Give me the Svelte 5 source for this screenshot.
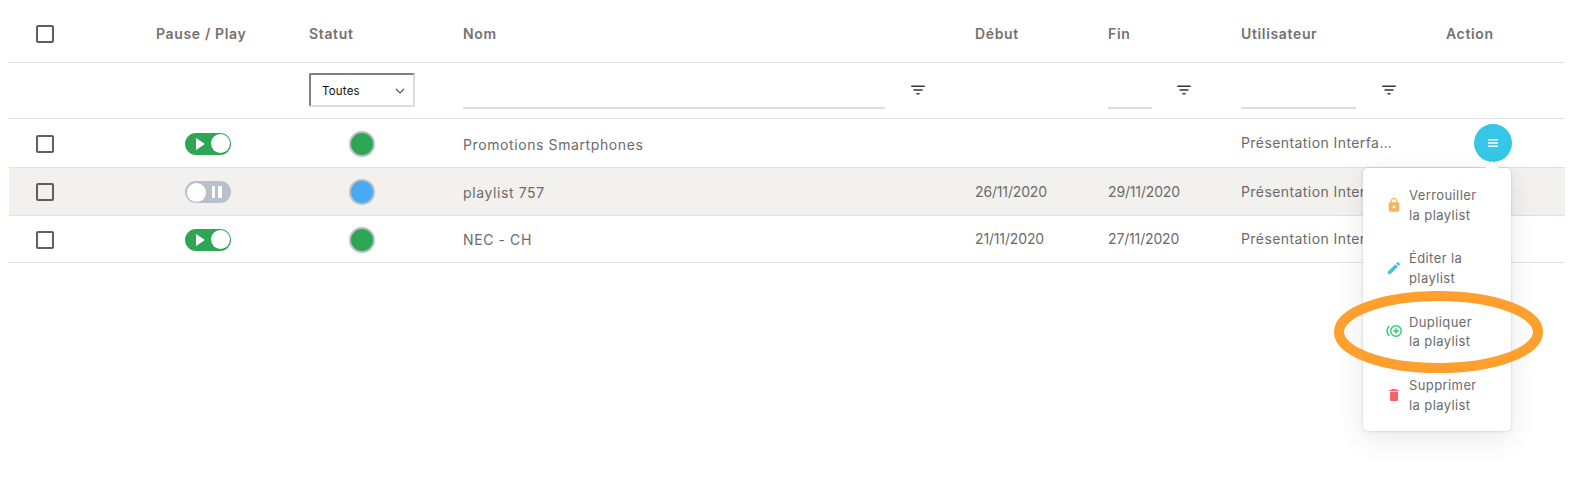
<script>
  const rows = [
    { on: true, status: "green", name: "Promotions Smartphones", start: "", end: "" },
    { on: false, status: "blue", name: "playlist 757", start: "26/11/2020", end: "29/11/2020" },
    { on: true, status: "green", name: "NEC - CH", start: "21/11/2020", end: "27/11/2020" },
  ];
  const filterPath = "M10 18h4v-2h-4v2zM3 6v2h18V6H3zm3 7h12v-2H6v2z";
</script>

<div class="page">
  <table>
    <colgroup>
      <col style="width:147px" /><col style="width:153px" /><col style="width:154px" /><col style="width:512px" />
      <col style="width:133px" /><col style="width:133px" /><col style="width:205px" /><col style="width:119px" />
    </colgroup>
    <thead>
      <tr class="head">
        <th class="first"><span class="check"></span></th>
        <th>Pause / Play</th>
        <th>Statut</th>
        <th>Nom</th>
        <th>Début</th>
        <th>Fin</th>
        <th>Utilisateur</th>
        <th>Action</th>
      </tr>
      <tr class="filters">
        <td></td>
        <td></td>
        <td>
          <div class="select">
            <span>Toutes</span>
            <svg width="10" height="6" viewBox="0 0 10 6"><path d="M1 1l4 4 4-4" fill="none" stroke="#555" stroke-width="1.2" /></svg>
          </div>
        </td>
        <td>
          <div class="filter" style="--w:422px;--gap:24px">
            <span class="field"></span>
            <svg width="18" height="18" viewBox="0 0 24 24"><path d={filterPath} fill="#333" /></svg>
          </div>
        </td>
        <td></td>
        <td>
          <div class="filter" style="--w:44px;--gap:23px">
            <span class="field"></span>
            <svg width="18" height="18" viewBox="0 0 24 24"><path d={filterPath} fill="#333" /></svg>
          </div>
        </td>
        <td>
          <div class="filter" style="--w:115px;--gap:24px">
            <span class="field"></span>
            <svg width="18" height="18" viewBox="0 0 24 24"><path d={filterPath} fill="#333" /></svg>
          </div>
        </td>
        <td></td>
      </tr>
    </thead>
    <tbody>
      {#each rows as row, i}
        <tr class:alt={i === 1} class="row{i}">
          <td class="first"><span class="check"></span></td>
          <td>
            <div class="toggle" class:on={row.on}>
              {#if row.on}
                <svg width="14" height="14" viewBox="0 0 14 14"><path d="M3 1l9 6-9 6z" fill="#fff" /></svg>
                <span class="knob"></span>
              {:else}
                <span class="knob"></span>
                <span class="bars"><i></i><i></i></span>
              {/if}
            </div>
          </td>
          <td><div class="dot {row.status}"></div></td>
          <td class="name">{row.name}</td>
          <td class="date">{row.start}</td>
          <td class="date">{row.end}</td>
          <td><div class="user">Présentation Interface</div></td>
          <td></td>
        </tr>
      {/each}
    </tbody>
  </table>

  <button class="menu-btn" aria-label="Actions">
    <svg width="14" height="14" viewBox="0 0 14 14"><path d="M2 3h10v1.600H2zM2 6.200h10v1.600H2zM2 9.400h10V11H2z" fill="#fff" /></svg>
  </button>

  <div class="menu">
    <span class="caret"></span>
    <div class="item">
      <svg width="16" height="16" viewBox="0 0 24 24"><path fill="#F7B55F" d="M18 8h-1V6c0-2.760-2.240-5-5-5S7 3.240 7 6v2H6c-1.100 0-2 .9-2 2v10c0 1.100.9 2 2 2h12c1.100 0 2-.9 2-2V10c0-1.100-.9-2-2-2zm-6 9c-1.100 0-2-.9-2-2s.9-2 2-2 2 .9 2 2-.9 2-2 2zm3.100-9H8.900V6c0-1.710 1.390-3.100 3.100-3.100 1.710 0 3.100 1.390 3.100 3.100v2z" /></svg>
      <span>Verrouiller<br />la playlist</span>
    </div>
    <div class="item">
      <svg width="16" height="16" viewBox="0 0 24 24"><path fill="#36C7E8" d="M3 17.250V21h3.750L17.810 9.940l-3.750-3.750L3 17.250zM20.710 7.040c.39-.39.39-1.020 0-1.410l-2.340-2.340c-.39-.39-1.020-.39-1.410 0l-1.830 1.830 3.750 3.750 1.830-1.830z" /></svg>
      <span>Éditer la<br />playlist</span>
    </div>
    <div class="item tall">
      <svg width="16" height="16" viewBox="0 0 16 16" fill="none" stroke="#2ECC71" stroke-width="1.400">
        <circle cx="10" cy="8" r="5.300" />
        <path d="M10 5.300v5.400M7.300 8h5.400" />
        <path d="M3.400 3a6.500 6.500 0 0 0 0 10" />
      </svg>
      <span>Dupliquer<br />la playlist</span>
    </div>
    <div class="item">
      <svg width="16" height="16" viewBox="0 0 24 24"><path fill="#F8636B" d="M6 19c0 1.100.9 2 2 2h8c1.100 0 2-.9 2-2V7H6v12zM19 4h-3.500l-1-1h-5l-1 1H5v2h14V4z" /></svg>
      <span>Supprimer<br />la playlist</span>
    </div>
  </div>

  <svg class="mark" width="209" height="82" viewBox="0 0 209 82">
    <ellipse cx="104.500" cy="41" rx="99.500" ry="36" fill="none" stroke="#FF9F2E" stroke-width="10" />
  </svg>
</div>

<style>
  :global(body) {
    background: #fff;
  }
  .page {
    position: relative;
    height: 479px;
    padding-left: 9px;
    overflow: hidden;
    font-family: Inter, "Liberation Sans", sans-serif;
    font-size: 14px;
    letter-spacing: 0.55px;
    color: #6b6b6b;
  }
  table {
    table-layout: fixed;
    width: 1556px;
    border-collapse: collapse;
  }
  th,
  td {
    padding: 0;
    border-bottom: 1px solid #e2e2e2;
    text-align: left;
    vertical-align: middle;
    white-space: nowrap;
  }
  th {
    padding-top: 6px;
    font-weight: 600;
    letter-spacing: 0.65px;
    color: #757170;
  }
  tbody td {
    padding-top: 2px;
  }
  .first {
    padding-left: 27px;
  }
  .head {
    height: 62px;
  }
  .filters {
    height: 56px;
  }
  .row0 {
    height: 49px;
  }
  .row1 {
    height: 48px;
  }
  .row2 {
    height: 47px;
  }
  .alt {
    background: #f2f1ee;
  }
  .check {
    display: block;
    box-sizing: border-box;
    width: 18px;
    height: 18px;
    border: 2px solid #605f5f;
    border-radius: 2px;
    background: #fff;
  }
  .alt .check {
    background: #f2f1ee;
  }
  .select {
    box-sizing: border-box;
    display: flex;
    align-items: center;
    justify-content: space-between;
    width: 106px;
    height: 34px;
    padding: 2px 8px 0 11px;
    border: 2px solid;
    border-color: #808080 #dcdcdc #dcdcdc #808080;
    border-radius: 2px;
    font-size: 11.500px;
    letter-spacing: 0.2px;
    color: #111;
  }
  .filter {
    display: flex;
    align-items: flex-start;
    gap: var(--gap);
    height: 38px;
  }
  .filter svg {
    margin-top: 10px;
  }
  .field {
    width: var(--w);
    height: 36px;
    border-bottom: 2px solid #dedede;
  }
  .toggle {
    box-sizing: border-box;
    display: flex;
    align-items: center;
    justify-content: space-between;
    width: 46px;
    height: 22px;
    margin-left: 29px;
    padding: 0 1.500px;
    border-radius: 11px;
    background: #b8c0cb;
  }
  .toggle.on {
    padding-left: 8px;
    background: #2ea653;
  }
  .knob {
    width: 19px;
    height: 19px;
    border-radius: 50%;
    background: #fff;
  }
  .bars {
    display: flex;
    gap: 3px;
    margin-right: 8px;
  }
  .bars i {
    width: 3.500px;
    height: 12px;
    background: #fff;
  }
  .dot {
    box-sizing: border-box;
    width: 26px;
    height: 26px;
    margin-left: 40px;
    border: 2px solid #b8bfc9;
    border-radius: 50%;
  }
  .dot.green {
    background: #2ea653;
  }
  .dot.blue {
    background: #47aaf2;
  }
  .name {
    letter-spacing: 0.6px;
  }
  .row0 .name {
    padding-top: 4px;
  }
  .date {
    padding-top: 0;
    letter-spacing: -0.15px;
  }
  .user {
    width: 153px;
    overflow: hidden;
    text-overflow: ellipsis;
    letter-spacing: 0.42px;
    margin-top: -2px;
  }
  .menu-btn {
    position: absolute;
    left: 1474px;
    top: 124px;
    display: flex;
    align-items: center;
    justify-content: center;
    width: 38px;
    height: 38px;
    padding: 0;
    border: 0;
    border-radius: 50%;
    background: #36c7e8;
  }
  .menu {
    position: absolute;
    left: 1363px;
    top: 168px;
    box-sizing: border-box;
    width: 148px;
    height: 263px;
    padding: 6px 0;
    border-radius: 5px;
    background: #fff;
    box-shadow: 0 0 3px rgba(0, 0, 0, 0.18), 0 8px 30px rgba(0, 0, 0, 0.09);
    font-size: 13px;
    line-height: 19.500px;
    letter-spacing: 0.4px;
  }
  .caret {
    position: absolute;
    left: 124px;
    top: -5px;
    width: 10px;
    height: 10px;
    transform: rotate(45deg);
    background: #fff;
    box-shadow: -1px -1px 2px rgba(0, 0, 0, 0.08);
  }
  .item {
    position: relative;
    display: flex;
    align-items: center;
    gap: 7px;
    height: 63px;
    padding-left: 23px;
  }
  .item.tall {
    height: 64px;
  }
  .item svg {
    margin-top: -2px;
  }
  .mark {
    position: absolute;
    left: 1334px;
    top: 291px;
  }
</style>
